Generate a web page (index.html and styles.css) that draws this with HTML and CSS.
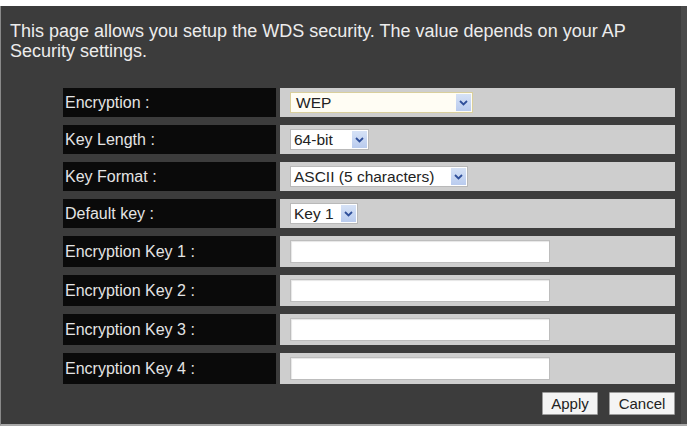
FILE: index.html
```html
<!DOCTYPE html>
<html lang="en">
<head>
  <meta charset="UTF-8" />
  <meta name="viewport" content="width=device-width, initial-scale=1" />
  <title>WDS Security</title>
  <link rel="stylesheet" href="styles.css">
</head>
<body>

  <div class="panel">
    <p class="intro">This page allows you setup the WDS security. The value depends on your AP Security settings.</p>

    <div class="form">
      <div class="row">
        <div class="label">Encryption :</div>
        <div class="value">
          <div class="select focus w-enc"><span>WEP</span>
            <span class="arrow"><svg width="9" height="6" viewBox="0 0 9 6"><path d="M1 1 L4.5 4.5 L8 1" fill="none" stroke="#2f4f9a" stroke-width="1.8"/></svg></span>
          </div>
        </div>
      </div>
      <div class="row">
        <div class="label">Key Length :</div>
        <div class="value">
          <div class="select w-len"><span>64-bit</span>
            <span class="arrow"><svg width="9" height="6" viewBox="0 0 9 6"><path d="M1 1 L4.5 4.5 L8 1" fill="none" stroke="#2f4f9a" stroke-width="1.8"/></svg></span>
          </div>
        </div>
      </div>
      <div class="row">
        <div class="label">Key Format :</div>
        <div class="value">
          <div class="select w-fmt"><span>ASCII (5 characters)</span>
            <span class="arrow"><svg width="9" height="6" viewBox="0 0 9 6"><path d="M1 1 L4.5 4.5 L8 1" fill="none" stroke="#2f4f9a" stroke-width="1.8"/></svg></span>
          </div>
        </div>
      </div>
      <div class="row">
        <div class="label">Default key :</div>
        <div class="value">
          <div class="select w-key"><span>Key 1</span>
            <span class="arrow"><svg width="9" height="6" viewBox="0 0 9 6"><path d="M1 1 L4.5 4.5 L8 1" fill="none" stroke="#2f4f9a" stroke-width="1.8"/></svg></span>
          </div>
        </div>
      </div>
      <div class="row tall">
        <div class="label">Encryption Key 1 :</div>
        <div class="value"><input type="text" class="key-input" /></div>
      </div>
      <div class="row tall">
        <div class="label">Encryption Key 2 :</div>
        <div class="value"><input type="text" class="key-input" /></div>
      </div>
      <div class="row tall">
        <div class="label">Encryption Key 3 :</div>
        <div class="value"><input type="text" class="key-input" /></div>
      </div>
      <div class="row tall">
        <div class="label">Encryption Key 4 :</div>
        <div class="value"><input type="text" class="key-input" /></div>
      </div>
    </div>

    <div class="actions">
      <button>Apply</button>
      <button class="cancel">Cancel</button>
    </div>
  </div>

</body>
</html>
```

FILE: styles.css
```css
/* WDS security page */
body {
  margin: 0;
  background-color: #fff;
  font-family: "Liberation Sans", Arial, sans-serif;
}
.panel {
  margin-top: 6px;
  height: 418px;
  background-color: #3c3c3c;
  border-left: 1px solid #8a8a8a;
  border-bottom: 2px solid #a8a8a8;
  box-shadow: inset -6px 0 0 #4a4a4a;
  overflow: hidden;
}
.intro {
  margin: 15px 0 0;
  padding: 0 40px 0 9px;
  font-size: 18px;
  line-height: 20px;
  color: #ececec;
}
.form {
  display: flex;
  flex-direction: column;
  gap: 8px;
  margin: 27px 0 0 62px;
  width: 612px;
}
.row {
  display: flex;
  gap: 4px;
  height: 29px;
}
.row.tall {
  height: 31px;
}
.label {
  width: 213px;
  background-color: #0a0a0a;
  color: #e4e4e4;
  font-size: 16px;
  display: flex;
  align-items: center;
  padding-left: 2px;
  box-sizing: border-box;
}
.value {
  flex: 1;
  background-color: #cecece;
  display: flex;
  align-items: center;
  padding-left: 10px;
}
.select {
  height: 21px;
  box-sizing: border-box;
  border: 1px solid #b9b9b9;
  background-color: #fff;
  display: flex;
  align-items: center;
  justify-content: space-between;
  padding: 0 1px 0 3px;
  font-size: 15.5px;
  color: #222;
}
.select.focus {
  border-color: #d9cf9c;
  background-color: #fffdf4;
  padding-left: 5px;
}
.arrow {
  width: 15px;
  height: 17px;
  background: linear-gradient(#d6e2f6, #b9cbee);
  display: flex;
  align-items: center;
  justify-content: center;
}
.w-enc { width: 183px; }
.w-len { width: 79px; }
.w-fmt { width: 178px; }
.w-key { width: 68px; }
.key-input {
  width: 260px;
  height: 23px;
  box-sizing: border-box;
  margin: 0;
  border: 1px solid #bdbdbd;
  background-color: #fff;
  box-shadow: inset 1px 1px 1px #e6e6e6;
}
.actions {
  display: flex;
  justify-content: flex-end;
  gap: 11px;
  margin: 8px 0 0;
  padding-right: 12px;
}
.actions button {
  height: 23px;
  width: 56px;
  padding: 0;
  font-family: "Liberation Sans", Arial, sans-serif;
  font-size: 15px;
  color: #222;
  background-color: #f4f4f4;
  border: 1px solid #9c9c9c;
  border-radius: 1px;
}
.actions button.cancel {
  width: 66px;
}
```
